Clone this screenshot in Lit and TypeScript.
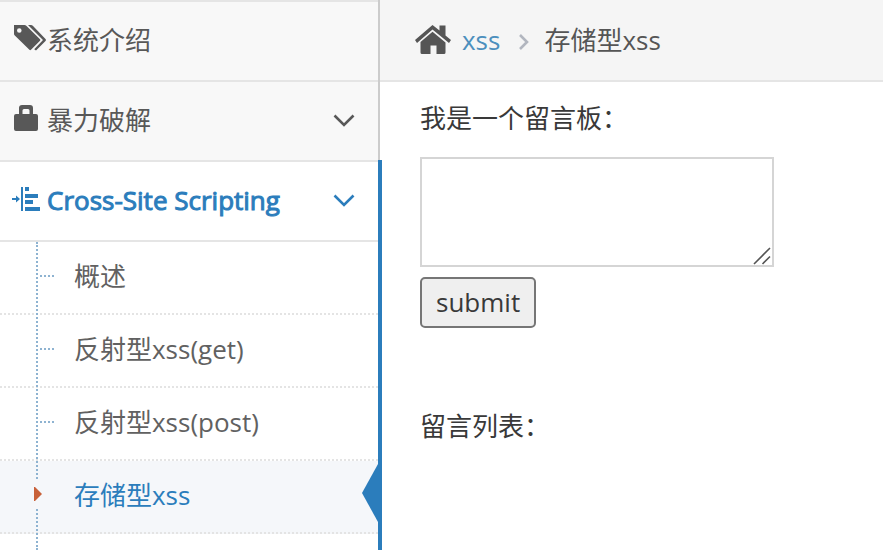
import { LitElement, html, css, svg, nothing } from "lit";
import { customElement, property } from "lit/decorators.js";
import { classMap } from "lit/directives/class-map.js";

const icons = {
  tags: svg`
    <path fill-rule="evenodd" d="M2 5h10.500q1 0 1.800.8L28 19.200q.8.8 0 1.600L19 29.800q-.8.800-1.600 0L2.800 15.600Q2 14.800 2 13.800zM7.300 8.200a2.300 2.300 0 1 0 0 4.600a2.300 2.300 0 1 0 0-4.600z"/>
    <path d="M16 5h3q1 0 1.800.8L33.500 18.900q1.100 1.100 0 2.200L24 30.600l-1.800-1.400L31 20z"/>`,
  lock: svg`
    <path fill-rule="evenodd" d="M7 14V8q0-3 3-3h8q3 0 3 3v6h3q2 0 2 2v13q0 2-2 2H4q-2 0-2-2V16q0-2 2-2zM10.500 14h7v-3.500q0-1.500-1.500-1.500h-4q-1.500 0-1.500 1.500z"/>`,
  indent: svg`
    <path d="M0 18h4v-2.500L8 19l-4 3.500V20H0zM9 7h2v24H9zM13 7h4v4h-4zM13 14h13v4H13zM13 20h8v4h-8zM13 27h15v4H13z"/>`,
};

type IconName = keyof typeof icons;

@customElement("nav-group")
class NavGroup extends LitElement {
  @property() icon: IconName = "tags";
  @property() label = "";
  @property({ type: Boolean }) open = false;
  @property({ type: Boolean }) expandable = false;

  static styles = css`
    :host { display: block; position: relative; }
    .head {
      display: flex;
      align-items: center;
      height: 76px;
      padding: 0 22px 2px 12px;
      border-top: 2px solid #e5e5e5;
      background: #f8f8f8;
      color: #585858;
      text-decoration: none;
    }
    .head.open {
      background: #fff;
      color: #2b7dbc;
      border-bottom: 2px solid #e5e5e5;
    }
    .open .label { -webkit-text-stroke: 1px currentColor; }
    .icon { width: 35px; height: 36px; fill: currentColor; flex: none; }
    .label { flex: 1; white-space: nowrap; }
    .arrow { width: 24px; height: 24px; fill: none; stroke: currentColor; stroke-width: 2.600; }
    :host([open]) { flex: 1; }
    :host([open])::after {
      content: "";
      position: absolute;
      top: 0;
      bottom: 0;
      left: 100%;
      width: 4px;
      background: #2b7dbc;
    }
  `;

  render() {
    return html`
      <a class=${classMap({ head: true, open: this.open })} href="#">
        <svg class="icon" viewBox="0 2 35 36" aria-hidden="true">${icons[this.icon]}</svg>
        <span class="label">${this.label}</span>
        ${this.expandable
          ? html`<svg class="arrow" viewBox="0 0 24 24" aria-hidden="true"><path d="M2.500 7.500L12 17l9.500-9.500"/></svg>`
          : nothing}
      </a>
      <slot></slot>
    `;
  }
}

@customElement("app-root")
class AppRoot extends LitElement {
  static styles = css`
    :host {
      display: flex;
      min-height: 100vh;
      background: #fff;
      color: #393939;
      font: 26px/39px "Open Sans", "Noto Sans CJK SC", sans-serif;
    }
    .sidebar {
      position: relative;
      z-index: 1;
      display: flex;
      flex-direction: column;
      flex: none;
      width: 378px;
      border-right: 2px solid #ccc;
    }
    .submenu {
      list-style: none;
      margin: 0;
      padding: 0;
    }
    .line {
      position: absolute;
      z-index: 1;
      top: 82px;
      bottom: 0;
      left: 36px;
      border-left: 2px dotted #8eb3d1;
    }
    .item { position: relative; border-bottom: 2px dotted #e4e4e4; }
    .item::before {
      content: "";
      position: absolute;
      top: 33px;
      left: 40px;
      width: 14px;
      border-top: 2px dotted #8eb3d1;
    }
    .link {
      display: flex;
      align-items: center;
      height: 68px;
      padding: 0 0 3px 74px;
      color: #616161;
      text-decoration: none;
    }
    .current { background: #f5f7fa; }
    .current::before { display: none; }
    .current .link { color: #2b7dbc; }
    .marker {
      position: absolute;
      z-index: 2;
      top: 20px;
      left: 32px;
      width: 12px;
      height: 26px;
      background: #f5f7fa;
      fill: #c86139;
    }
    .notch {
      position: absolute;
      top: 3px;
      right: 0;
      width: 16px;
      height: 58px;
      fill: #2b7dbc;
    }
    .main { flex: 1; min-width: 0; }
    .crumbs {
      display: flex;
      align-items: center;
      height: 80px;
      padding-left: 34px;
      background: #f5f5f5;
      border-bottom: 2px solid #e5e5e5;
      color: #555;
      white-space: nowrap;
    }
    .home { width: 38px; height: 36px; margin-right: 10px; fill: currentColor; }
    .crumb { color: #4c8fbd; text-decoration: none; }
    .sep { width: 12px; height: 18px; margin: 4px 14px 0 18px; fill: none; stroke: #b2b6bf; stroke-width: 2.600; }
    .content { padding: 17px 40px; }
    .title { display: block; margin: 0; }
    .field { position: relative; width: 354px; max-width: 100%; margin: 19px 0 10px; }
    .message {
      display: block;
      box-sizing: border-box;
      width: 100%;
      height: 110px;
      padding: 6px 8px;
      border: 2px solid #d5d5d5;
      border-radius: 0;
      background: #fff;
      color: inherit;
      font: inherit;
      resize: none;
    }
    .grip { position: absolute; right: 3px; bottom: 2px; width: 18px; height: 18px; stroke: #555; stroke-width: 1.600; fill: none; pointer-events: none; }
    .submit {
      display: block;
      padding: 4px 14px;
      border: 2px solid #767676;
      border-radius: 5px;
      background: #efefef;
      color: #393939;
      font: inherit;
    }
    .list { margin: 79px 0 0; }
  `;

  private items = ["概述", "反射型xss(get)", "反射型xss(post)", "存储型xss"];
  private current = "存储型xss";

  private renderItem(label: string) {
    const on = label === this.current;
    return html`
      <li class=${classMap({ item: true, current: on })}>
        <a class="link" href="#">${label}</a>
        ${on
          ? html`
              <svg class="marker" viewBox="0 0 12 26" aria-hidden="true"><path d="M2 6h1l7 7-7 7H2z"/></svg>
              <svg class="notch" viewBox="0 0 16 58" aria-hidden="true"><path d="M16 0v58L0 29z"/></svg>`
          : nothing}
      </li>`;
  }

  render() {
    return html`
      <nav class="sidebar">
        <nav-group icon="tags" label="系统介绍"></nav-group>
        <nav-group icon="lock" label="暴力破解" expandable></nav-group>
        <nav-group icon="indent" label="Cross-Site Scripting" expandable open>
          <div class="line"></div>
          <ul class="submenu">${this.items.map((i) => this.renderItem(i))}</ul>
        </nav-group>
      </nav>
      <main class="main">
        <div class="crumbs">
          <svg class="home" viewBox="0 0 38 36" aria-hidden="true">
            <path d="M18.500 3L25.500 8.500V3.500h6V13.500L37 18l-2 3L18.500 7.500L3 21l-2-3z"/>
            <path d="M18.500 9.800L31.500 20.500V30.500Q31.500 32 30 32H22.500V23.500h-6v8.500H8q-1.500 0-1.500-1.500V20z"/>
          </svg>
          <a class="crumb" href="#">xss</a>
          <svg class="sep" viewBox="0 0 12 18" aria-hidden="true"><path d="M2 2l7 7-7 7"/></svg>
          <span>存储型xss</span>
        </div>
        <form class="content" @submit=${(e: Event) => e.preventDefault()}>
          <label class="title" for="message">我是一个留言板：</label>
          <div class="field">
            <textarea class="message" id="message"></textarea>
            <svg class="grip" viewBox="0 0 18 18" aria-hidden="true"><path d="M1 17L17 1M9.500 17L17 9.500"/></svg>
          </div>
          <button class="submit" type="submit">submit</button>
          <p class="list">留言列表：</p>
        </form>
      </main>
    `;
  }
}
